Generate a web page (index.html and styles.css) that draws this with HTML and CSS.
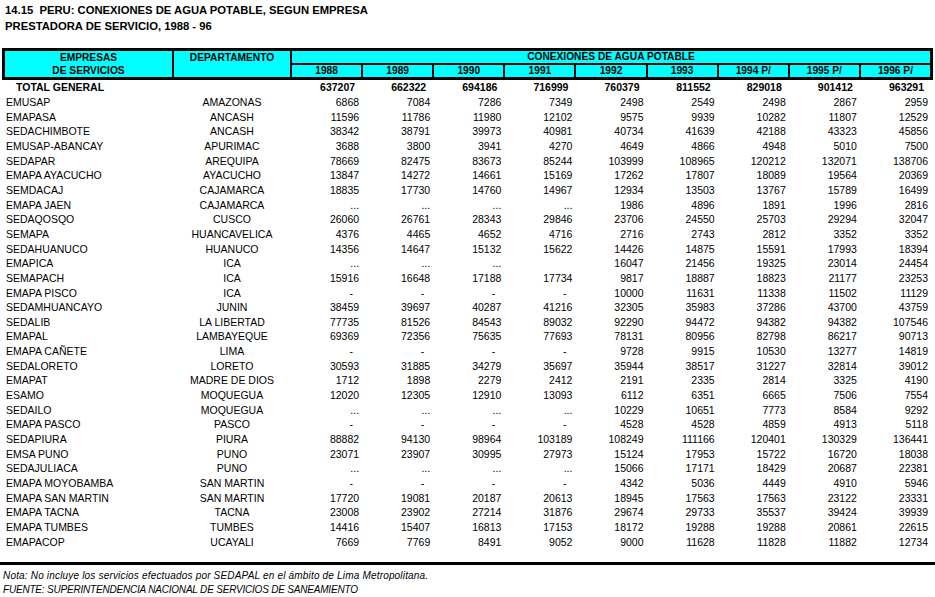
FILE: index.html
```html
<!DOCTYPE html>
<html lang="es">
<head>
<meta charset="utf-8">
<title>14.15 PERU: Conexiones de agua potable</title>
<link rel="stylesheet" href="styles.css">
</head>
<body>
<div class="title">
  <div>14.15&nbsp; PERU: CONEXIONES DE AGUA POTABLE, SEGUN EMPRESA</div>
  <div>PRESTADORA DE SERVICIO, 1988 - 96</div>
</div>

<div class="thead">
  <div class="hc h-emp">EMPRESAS<br>DE SERVICIOS</div>
  <div class="hc h-dep">DEPARTAMENTO</div>
  <div class="hc h-con">CONEXIONES DE AGUA POTABLE</div>
  <div class="hc">1988</div>
  <div class="hc">1989</div>
  <div class="hc">1990</div>
  <div class="hc">1991</div>
  <div class="hc">1992</div>
  <div class="hc">1993</div>
  <div class="hc">1994 P/</div>
  <div class="hc">1995 P/</div>
  <div class="hc">1996 P/</div>
</div>

<div class="tbody">
  <div class="row total"><span class="emp">TOTAL GENERAL</span><span class="dep"></span><span class="n">637207</span><span class="n">662322</span><span class="n">694186</span><span class="n">716999</span><span class="n">760379</span><span class="n">811552</span><span class="n">829018</span><span class="n">901412</span><span class="n">963291</span></div>
  <div class="row"><span class="emp">EMUSAP</span><span class="dep">AMAZONAS</span><span class="n">6868</span><span class="n">7084</span><span class="n">7286</span><span class="n">7349</span><span class="n">2498</span><span class="n">2549</span><span class="n">2498</span><span class="n">2867</span><span class="n">2959</span></div>
  <div class="row"><span class="emp">EMAPASA</span><span class="dep">ANCASH</span><span class="n">11596</span><span class="n">11786</span><span class="n">11980</span><span class="n">12102</span><span class="n">9575</span><span class="n">9939</span><span class="n">10282</span><span class="n">11807</span><span class="n">12529</span></div>
  <div class="row"><span class="emp">SEDACHIMBOTE</span><span class="dep">ANCASH</span><span class="n">38342</span><span class="n">38791</span><span class="n">39973</span><span class="n">40981</span><span class="n">40734</span><span class="n">41639</span><span class="n">42188</span><span class="n">43323</span><span class="n">45856</span></div>
  <div class="row"><span class="emp">EMUSAP-ABANCAY</span><span class="dep">APURIMAC</span><span class="n">3688</span><span class="n">3800</span><span class="n">3941</span><span class="n">4270</span><span class="n">4649</span><span class="n">4866</span><span class="n">4948</span><span class="n">5010</span><span class="n">7500</span></div>
  <div class="row"><span class="emp">SEDAPAR</span><span class="dep">AREQUIPA</span><span class="n">78669</span><span class="n">82475</span><span class="n">83673</span><span class="n">85244</span><span class="n">103999</span><span class="n">108965</span><span class="n">120212</span><span class="n">132071</span><span class="n">138706</span></div>
  <div class="row"><span class="emp">EMAPA AYACUCHO</span><span class="dep">AYACUCHO</span><span class="n">13847</span><span class="n">14272</span><span class="n">14661</span><span class="n">15169</span><span class="n">17262</span><span class="n">17807</span><span class="n">18089</span><span class="n">19564</span><span class="n">20369</span></div>
  <div class="row"><span class="emp">SEMDACAJ</span><span class="dep">CAJAMARCA</span><span class="n">18835</span><span class="n">17730</span><span class="n">14760</span><span class="n">14967</span><span class="n">12934</span><span class="n">13503</span><span class="n">13767</span><span class="n">15789</span><span class="n">16499</span></div>
  <div class="row"><span class="emp">EMAPA JAEN</span><span class="dep">CAJAMARCA</span><span class="n">...</span><span class="n">...</span><span class="n">...</span><span class="n">...</span><span class="n">1986</span><span class="n">4896</span><span class="n">1891</span><span class="n">1996</span><span class="n">2816</span></div>
  <div class="row"><span class="emp">SEDAQOSQO</span><span class="dep">CUSCO</span><span class="n">26060</span><span class="n">26761</span><span class="n">28343</span><span class="n">29846</span><span class="n">23706</span><span class="n">24550</span><span class="n">25703</span><span class="n">29294</span><span class="n">32047</span></div>
  <div class="row"><span class="emp">SEMAPA</span><span class="dep">HUANCAVELICA</span><span class="n">4376</span><span class="n">4465</span><span class="n">4652</span><span class="n">4716</span><span class="n">2716</span><span class="n">2743</span><span class="n">2812</span><span class="n">3352</span><span class="n">3352</span></div>
  <div class="row"><span class="emp">SEDAHUANUCO</span><span class="dep">HUANUCO</span><span class="n">14356</span><span class="n">14647</span><span class="n">15132</span><span class="n">15622</span><span class="n">14426</span><span class="n">14875</span><span class="n">15591</span><span class="n">17993</span><span class="n">18394</span></div>
  <div class="row"><span class="emp">EMAPICA</span><span class="dep">ICA</span><span class="n">...</span><span class="n">...</span><span class="n">...</span><span class="n"></span><span class="n">16047</span><span class="n">21456</span><span class="n">19325</span><span class="n">23014</span><span class="n">24454</span></div>
  <div class="row"><span class="emp">SEMAPACH</span><span class="dep">ICA</span><span class="n">15916</span><span class="n">16648</span><span class="n">17188</span><span class="n">17734</span><span class="n">9817</span><span class="n">18887</span><span class="n">18823</span><span class="n">21177</span><span class="n">23253</span></div>
  <div class="row"><span class="emp">EMAPA PISCO</span><span class="dep">ICA</span><span class="n dash">-</span><span class="n dash">-</span><span class="n dash">-</span><span class="n dash">-</span><span class="n">10000</span><span class="n">11631</span><span class="n">11338</span><span class="n">11502</span><span class="n">11129</span></div>
  <div class="row"><span class="emp">SEDAMHUANCAYO</span><span class="dep">JUNIN</span><span class="n">38459</span><span class="n">39697</span><span class="n">40287</span><span class="n">41216</span><span class="n">32305</span><span class="n">35983</span><span class="n">37286</span><span class="n">43700</span><span class="n">43759</span></div>
  <div class="row"><span class="emp">SEDALIB</span><span class="dep">LA LIBERTAD</span><span class="n">77735</span><span class="n">81526</span><span class="n">84543</span><span class="n">89032</span><span class="n">92290</span><span class="n">94472</span><span class="n">94382</span><span class="n">94382</span><span class="n">107546</span></div>
  <div class="row"><span class="emp">EMAPAL</span><span class="dep">LAMBAYEQUE</span><span class="n">69369</span><span class="n">72356</span><span class="n">75635</span><span class="n">77693</span><span class="n">78131</span><span class="n">80956</span><span class="n">82798</span><span class="n">86217</span><span class="n">90713</span></div>
  <div class="row"><span class="emp">EMAPA CAÑETE</span><span class="dep">LIMA</span><span class="n dash">-</span><span class="n dash">-</span><span class="n dash">-</span><span class="n dash">-</span><span class="n">9728</span><span class="n">9915</span><span class="n">10530</span><span class="n">13277</span><span class="n">14819</span></div>
  <div class="row"><span class="emp">SEDALORETO</span><span class="dep">LORETO</span><span class="n">30593</span><span class="n">31885</span><span class="n">34279</span><span class="n">35697</span><span class="n">35944</span><span class="n">38517</span><span class="n">31227</span><span class="n">32814</span><span class="n">39012</span></div>
  <div class="row"><span class="emp">EMAPAT</span><span class="dep">MADRE DE DIOS</span><span class="n">1712</span><span class="n">1898</span><span class="n">2279</span><span class="n">2412</span><span class="n">2191</span><span class="n">2335</span><span class="n">2814</span><span class="n">3325</span><span class="n">4190</span></div>
  <div class="row"><span class="emp">ESAMO</span><span class="dep">MOQUEGUA</span><span class="n">12020</span><span class="n">12305</span><span class="n">12910</span><span class="n">13093</span><span class="n">6112</span><span class="n">6351</span><span class="n">6665</span><span class="n">7506</span><span class="n">7554</span></div>
  <div class="row"><span class="emp">SEDAILO</span><span class="dep">MOQUEGUA</span><span class="n">...</span><span class="n">...</span><span class="n">...</span><span class="n">...</span><span class="n">10229</span><span class="n">10651</span><span class="n">7773</span><span class="n">8584</span><span class="n">9292</span></div>
  <div class="row"><span class="emp">EMAPA PASCO</span><span class="dep">PASCO</span><span class="n dash">-</span><span class="n dash">-</span><span class="n dash">-</span><span class="n dash">-</span><span class="n">4528</span><span class="n">4528</span><span class="n">4859</span><span class="n">4913</span><span class="n">5118</span></div>
  <div class="row"><span class="emp">SEDAPIURA</span><span class="dep">PIURA</span><span class="n">88882</span><span class="n">94130</span><span class="n">98964</span><span class="n">103189</span><span class="n">108249</span><span class="n">111166</span><span class="n">120401</span><span class="n">130329</span><span class="n">136441</span></div>
  <div class="row"><span class="emp">EMSA PUNO</span><span class="dep">PUNO</span><span class="n">23071</span><span class="n">23907</span><span class="n">30995</span><span class="n">27973</span><span class="n">15124</span><span class="n">17953</span><span class="n">15722</span><span class="n">16720</span><span class="n">18038</span></div>
  <div class="row"><span class="emp">SEDAJULIACA</span><span class="dep">PUNO</span><span class="n">...</span><span class="n">...</span><span class="n">...</span><span class="n">...</span><span class="n">15066</span><span class="n">17171</span><span class="n">18429</span><span class="n">20687</span><span class="n">22381</span></div>
  <div class="row"><span class="emp">EMAPA MOYOBAMBA</span><span class="dep">SAN MARTIN</span><span class="n dash">-</span><span class="n dash">-</span><span class="n dash">-</span><span class="n dash">-</span><span class="n">4342</span><span class="n">5036</span><span class="n">4449</span><span class="n">4910</span><span class="n">5946</span></div>
  <div class="row"><span class="emp">EMAPA SAN MARTIN</span><span class="dep">SAN MARTIN</span><span class="n">17720</span><span class="n">19081</span><span class="n">20187</span><span class="n">20613</span><span class="n">18945</span><span class="n">17563</span><span class="n">17563</span><span class="n">23122</span><span class="n">23331</span></div>
  <div class="row"><span class="emp">EMAPA TACNA</span><span class="dep">TACNA</span><span class="n">23008</span><span class="n">23902</span><span class="n">27214</span><span class="n">31876</span><span class="n">29674</span><span class="n">29733</span><span class="n">35537</span><span class="n">39424</span><span class="n">39939</span></div>
  <div class="row"><span class="emp">EMAPA TUMBES</span><span class="dep">TUMBES</span><span class="n">14416</span><span class="n">15407</span><span class="n">16813</span><span class="n">17153</span><span class="n">18172</span><span class="n">19288</span><span class="n">19288</span><span class="n">20861</span><span class="n">22615</span></div>
  <div class="row"><span class="emp">EMAPACOP</span><span class="dep">UCAYALI</span><span class="n">7669</span><span class="n">7769</span><span class="n">8491</span><span class="n">9052</span><span class="n">9000</span><span class="n">11628</span><span class="n">11828</span><span class="n">11882</span><span class="n">12734</span></div>
</div>

<div class="rule"></div>

<div class="notes">
  <div class="nota">Nota: No incluye los servicios efectuados por SEDAPAL en el ámbito de Lima Metropolitana.</div>
  <div class="fuente">FUENTE: SUPERINTENDENCIA NACIONAL DE SERVICIOS DE SANEAMIENTO</div>
</div>
</body>
</html>
```

FILE: styles.css
```css
html, body {
  margin: 0;
  padding: 0;
  background: #ffffff;
  color: #000000;
  font-family: "Liberation Sans", Arial, sans-serif;
}

.title {
  padding: 2px 0 0 5px;
  font-size: 11.25px;
  font-weight: bold;
  line-height: 16px;
  white-space: nowrap;
}

.thead {
  margin: 14px 0 0 2px;
  width: 931px;
  box-sizing: border-box;
  border: 3px solid #000;
  background: #000;
  display: grid;
  grid-template-columns: 167px 116px repeat(9, 1fr);
  grid-template-rows: 12px 12px;
  gap: 2px;
}

.hc {
  background: #00ffff;
  font-size: 10.2px;
  font-weight: bold;
  line-height: 12px;
  text-align: center;
  white-space: nowrap;
}

.h-emp {
  grid-row: 1 / 3;
  line-height: 13px;
}

.h-dep {
  grid-row: 1 / 3;
  line-height: 13px;
}

.h-con {
  grid-column: 3 / 12;
}

.tbody {
  margin-left: 5px;
  width: 925px;
}

.row {
  display: grid;
  grid-template-columns: 167px 116px repeat(9, 1fr);
  column-gap: 2px;
  height: 14.67px;
  align-items: center;
  font-size: 10.5px;
  line-height: 14px;
  white-space: nowrap;
}

.emp {
  padding-left: 1px;
}

.dep {
  text-align: center;
}

.n {
  text-align: right;
  padding-right: 2px;
}

.n.dash {
  padding-right: 8px;
}

.total {
  font-weight: bold;
}

.total .emp {
  padding-left: 11px;
}

.total .n {
  padding-right: 6px;
}

.rule {
  margin-top: 12.5px;
  height: 3px;
  background: #000;
}

.notes {
  padding: 4px 0 0 3px;
  font-size: 10px;
  font-style: italic;
  line-height: 14px;
  white-space: nowrap;
}

.nota {
  letter-spacing: 0.18px;
}

.fuente {
  letter-spacing: -0.2px;
}
```
